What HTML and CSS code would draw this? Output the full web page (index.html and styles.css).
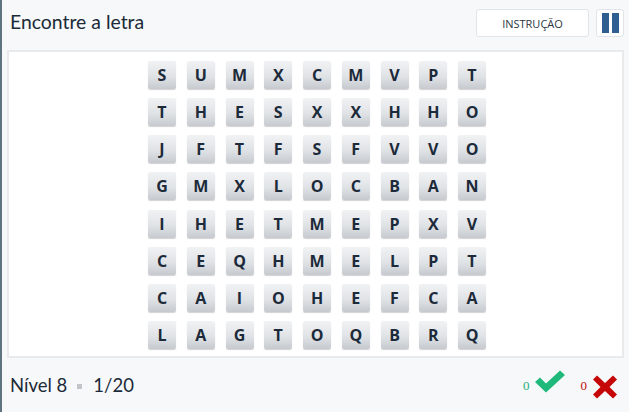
FILE: index.html
```html
<!DOCTYPE html>
<html lang="pt">
<head>
<meta charset="utf-8">
<link rel="stylesheet" href="styles.css">
</head>
<body>
<div class="app">
  <header class="top">
    <h1 class="title">Encontre a letra</h1>
    <div class="actions">
      <button class="btn-instr">INSTRUÇÃO</button>
      <button class="btn-pause" aria-label="pausa"><span></span><span></span></button>
    </div>
  </header>
  <main class="panel">
    <div class="grid">
      <div class="tile">S</div><div class="tile">U</div><div class="tile">M</div><div class="tile">X</div><div class="tile">C</div><div class="tile">M</div><div class="tile">V</div><div class="tile">P</div><div class="tile">T</div>
      <div class="tile">T</div><div class="tile">H</div><div class="tile">E</div><div class="tile">S</div><div class="tile">X</div><div class="tile">X</div><div class="tile">H</div><div class="tile">H</div><div class="tile">O</div>
      <div class="tile">J</div><div class="tile">F</div><div class="tile">T</div><div class="tile">F</div><div class="tile">S</div><div class="tile">F</div><div class="tile">V</div><div class="tile">V</div><div class="tile">O</div>
      <div class="tile">G</div><div class="tile">M</div><div class="tile">X</div><div class="tile">L</div><div class="tile">O</div><div class="tile">C</div><div class="tile">B</div><div class="tile">A</div><div class="tile">N</div>
      <div class="tile">I</div><div class="tile">H</div><div class="tile">E</div><div class="tile">T</div><div class="tile">M</div><div class="tile">E</div><div class="tile">P</div><div class="tile">X</div><div class="tile">V</div>
      <div class="tile">C</div><div class="tile">E</div><div class="tile">Q</div><div class="tile">H</div><div class="tile">M</div><div class="tile">E</div><div class="tile">L</div><div class="tile">P</div><div class="tile">T</div>
      <div class="tile">C</div><div class="tile">A</div><div class="tile">I</div><div class="tile">O</div><div class="tile">H</div><div class="tile">E</div><div class="tile">F</div><div class="tile">C</div><div class="tile">A</div>
      <div class="tile">L</div><div class="tile">A</div><div class="tile">G</div><div class="tile">T</div><div class="tile">O</div><div class="tile">Q</div><div class="tile">B</div><div class="tile">R</div><div class="tile">Q</div>
    </div>
  </main>
  <footer class="bottom">
    <div class="level"><span>Nível 8</span><span class="sep"></span><span>1/20</span></div>
    <div class="score">
      <span class="num ok">0</span>
      <svg class="ico-check" width="34" height="24" viewBox="0 0 34 24"><path d="M2 12 L7 7.5 L13 13.5 L27 0.5 L32 5 L13 22.5 Z" fill="#1fb97b"/></svg>
      <span class="num bad">0</span>
      <svg class="ico-x" width="26" height="24" viewBox="0 0 26 24"><path d="M1 4.5 L5 0.5 L13 8 L21 0.5 L25 4.5 L17.5 12 L25 19.5 L21 23.5 L13 16 L5 23.5 L1 19.5 L8.5 12 Z" fill="#c50707"/></svg>
    </div>
  </footer>
</div>
</body>
</html>
```
FILE: styles.css
```css
html, body {
  margin: 0;
  padding: 0;
  height: 100%;
}
body {
  background: #f6f8fa;
  font-family: "Open Sans", "Noto Sans", sans-serif;
  color: #1c2a38;
}
.app {
  height: 412px;
  border-left: 2px solid #5f7380;
  box-sizing: border-box;
  display: flex;
  flex-direction: column;
  padding: 0 5px 0 5px;
}
.top {
  height: 50px;
  display: flex;
  align-items: flex-start;
  justify-content: space-between;
}
.title {
  margin: 10px 0 0 3px;
  font-family: Lato, "Open Sans", sans-serif;
  font-size: 19.4px;
  font-weight: 400;
  color: #1c2a38;
}
.actions {
  display: flex;
  gap: 7px;
  margin-top: 9px;
}
.btn-instr {
  width: 113px;
  height: 28px;
  background: #fff;
  border: 1px solid #e2e5e8;
  border-radius: 3px;
  font-family: "Open Sans", sans-serif;
  font-size: 11px;
  color: #2d3640;
  padding: 0;
}
.btn-pause {
  width: 28px;
  height: 28px;
  background: #fff;
  border: 1px solid #e2e5e8;
  border-radius: 3px;
  display: flex;
  align-items: center;
  justify-content: center;
  gap: 3px;
  padding: 0;
}
.btn-pause span {
  width: 7px;
  height: 20px;
  background: #2f5f91;
}
.panel {
  height: 308px;
  background: #fff;
  border: 2px solid #e8eaec;
  box-sizing: border-box;
  display: flex;
  justify-content: center;
  padding-top: 9px;
}
.grid {
  display: grid;
  grid-template-columns: repeat(9, 28px);
  grid-auto-rows: 28px;
  column-gap: 10.75px;
  row-gap: 9.15px;
  margin-left: 3px;
}
.tile {
  background: linear-gradient(#f1f2f4 0%, #e0e3e6 55%, #c6cacf 100%);
  border-radius: 2px;
  box-shadow: 0 1px 1px rgba(0, 0, 0, 0.18);
  display: flex;
  align-items: center;
  justify-content: center;
  font-weight: 700;
  font-size: 16px;
  color: #1c2a3a;
}
.bottom {
  flex: 1;
  display: flex;
  align-items: center;
  justify-content: space-between;
}
.level {
  margin-left: 3px;
  font-family: Lato, "Open Sans", sans-serif;
  font-size: 18.5px;
  color: #1c2a38;
  display: flex;
  align-items: center;
}
.sep {
  display: inline-block;
  width: 5px;
  height: 5px;
  background: #c3c6c9;
  margin: 2px 11px 0 10px;
}
.score {
  display: flex;
  align-items: center;
  margin-right: 6px;
}
.num {
  font-family: "Liberation Serif", serif;
  font-size: 13px;
  margin-top: 2px;
}
.num.ok { color: #22b07a; margin-right: 3px; }
.num.bad { color: #c50707; margin-left: 14px; margin-right: 5px; }
.ico-check { margin-top: -6px; }
.ico-x { margin-top: 4px; }
```
